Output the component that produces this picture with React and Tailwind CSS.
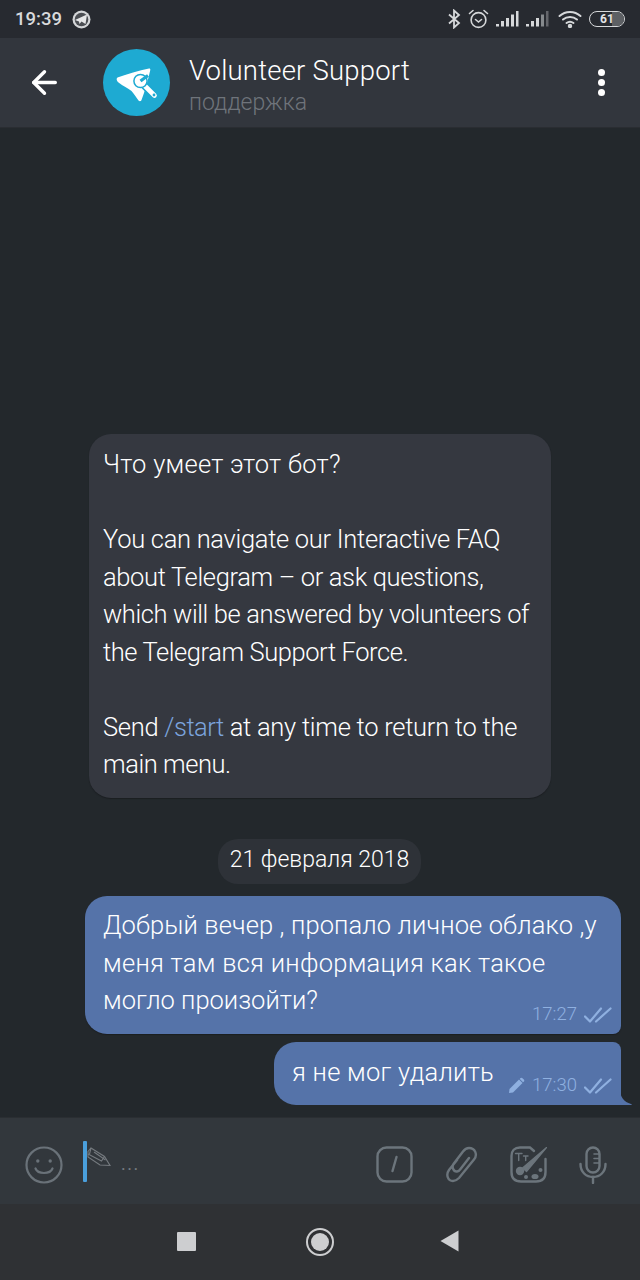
import React from 'react';
import { ArrowLeft } from 'lucide-react';

const DoubleCheck = () => (
  <svg width="28" height="18" viewBox="0 0 28 18" fill="none" stroke="#8fb0e0" strokeWidth="2.2" strokeLinecap="round" strokeLinejoin="round">
    <path d="M1 10.5 L6 15.5 L17 2.5" />
    <path d="M12 15.5 L26.5 2.5" />
  </svg>
);

const Signal = ({ dim }) => (
  <svg width="23" height="18" viewBox="0 0 23 18" fill="#d6d8da">
    <rect x="0" y="14" width="3" height="2.5" />
    <rect x="5" y="11" width="3" height="5.5" />
    <rect x="10" y="8" width="3" height="8.5" />
    <rect x="15" y="4.5" width="3" height="12" opacity={dim ? 0.55 : 1} />
    <rect x="20" y="1" width="2.5" height="15.5" opacity={dim ? 0.35 : 1} />
  </svg>
);

const StatusBar = () => (
  <div className="h-[38px] bg-[#272a30] flex items-center pl-[15px] pr-[15px] shrink-0">
    <span className="text-[18.5px] font-medium text-[#d8dadc] leading-none">19:39</span>
    <svg className="ml-[10px]" width="19" height="19" viewBox="0 0 19 19">
      <circle cx="9.5" cy="9.5" r="9" fill="#d4d6d8" />
      <circle cx="9.5" cy="9.5" r="6.8" fill="#4b4e53" />
      <path d="M3 10 L15 4.5 L13.5 14 L9.5 11.5 L7.5 14 L7 11.5 Z" fill="#e6e7e8" />
    </svg>
    <div className="ml-auto flex items-center gap-[7px]">
      <svg width="13" height="20" viewBox="0 0 13 20" fill="none" stroke="#d6d8da" strokeWidth="1.8">
        <path d="M1 5.5 L11 14 L6 18.5 V1.5 L11 6 L1 14.5" />
      </svg>
      <svg width="21" height="20" viewBox="0 0 21 20" fill="none" stroke="#d6d8da" strokeWidth="1.6" strokeLinecap="round">
        <circle cx="10.5" cy="11" r="7.4" />
        <path d="M7.5 10.5 L10.5 13 L13.5 10.5" />
        <path d="M1.5 4.5 L5 1.5 M19.5 4.5 L16 1.5" />
      </svg>
      <Signal />
      <Signal dim />
      <svg className="ml-[2px]" width="24" height="18" viewBox="0 0 24 18" fill="none" stroke="#d6d8da" strokeWidth="2" strokeLinecap="round">
        <path d="M1.5 6 C7.5 0.5 16.5 0.5 22.5 6" />
        <path d="M5 9.5 C9 6 15 6 19 9.5" />
        <path d="M8.5 13 C10.5 11.5 13.5 11.5 15.5 13" />
        <circle cx="12" cy="16" r="1.2" fill="#d6d8da" />
      </svg>
      <div className="relative w-[36px] h-[16px] rounded-full border-[1.5px] border-[#d6d8da] overflow-hidden flex items-center justify-center">
        <div className="absolute right-0 top-0 bottom-0 w-[12px] bg-[#5d6064]" />
        <span className="relative text-[12px] font-bold text-[#e2e3e4] leading-none">61</span>
      </div>
    </div>
  </div>
);

const Header = () => (
  <div className="h-[90px] bg-[#32363d] border-b border-[#2a2d32] flex items-center shrink-0">
    <div className="w-[103px] pl-[26px] shrink-0">
      <ArrowLeft size={37} color="#ffffff" strokeWidth={2.2} />
    </div>
    <div className="w-[67px] h-[67px] rounded-full bg-[#1eaad2] shrink-0">
      <svg width="67" height="67" viewBox="0 0 67 67">
        <path d="M14.5 28.5 C24 25 36 21.5 46 19.5 C47 19.3 47.5 20 47.3 21 C45 31 42 42 38.5 51 C38 52.5 36.5 52.5 35.5 51.5 C33 48 31 45 28.5 42 C25 39 20 37 15.5 33.5 C13.5 32 13 29.5 14.5 28.5 Z" fill="#ffffff" />
        <path d="M38 33 L51.5 46.5" stroke="#1eaad2" strokeWidth="8" strokeLinecap="round" />
        <path d="M38 33 L51.5 46.5" stroke="#ffffff" strokeWidth="4.6" strokeLinecap="round" />
        <circle cx="37.5" cy="32" r="6.6" fill="#ffffff" stroke="#1eaad2" strokeWidth="1.5" />
        <path d="M37.5 32 L45 26.5" stroke="#1eaad2" strokeWidth="3.2" />
        <circle cx="51" cy="46" r="1.4" fill="#1eaad2" />
      </svg>
    </div>
    <div className="ml-[19px] pt-[4px] flex flex-col">
      <span className="text-[27.5px] font-light text-white leading-[34px] tracking-[0.2px]">Volunteer Support</span>
      <span className="mt-[1px] text-[23px] font-light text-[#6f747b] leading-[27px]">поддержка</span>
    </div>
    <div className="ml-auto mr-[35px] flex flex-col gap-[3px]">
      <div className="w-[7px] h-[7px] rounded-full bg-white" />
      <div className="w-[7px] h-[7px] rounded-full bg-white" />
      <div className="w-[7px] h-[7px] rounded-full bg-white" />
    </div>
  </div>
);

const InfoCard = () => (
  <div className="ml-[89px] w-[462px] h-[364px] rounded-[22px] bg-[#353840] shadow-[0_1px_1px_#1b1e21] pl-[14px] pt-[12px] text-[25.5px] font-light leading-[37.5px] text-white">
    <p className="tracking-[0.26px]">Что умеет этот бот?</p>
    <p className="mt-[37.5px] tracking-[-0.3px]">
      You can navigate our Interactive FAQ<br />
      <span className="tracking-[-0.35px]">about Telegram – or ask questions,</span><br />
      <span className="tracking-[-0.38px]">which will be answered by volunteers of</span><br />
      <span className="tracking-[-0.42px]">the Telegram Support Force.</span>
    </p>
    <p className="mt-[37.5px] tracking-[-0.27px]">
      Send <span className="text-[#7ba3dc] tracking-[-0.5px]">/start</span> at any time to return to the<br />
      <span className="tracking-[-0.45px]">main menu.</span>
    </p>
  </div>
);

const Chat = () => (
  <div className="h-[989px] bg-[#23282c] flex flex-col pt-[306px] shrink-0">
    <InfoCard />
    <div className="mt-[41px] self-center ml-[-1px] h-[45px] w-[203px] rounded-[20px] bg-[#2e3238] flex items-center justify-center pb-[2px] text-[23px] font-light text-white">
      21 февраля 2018
    </div>
    <div className="mt-[12px] ml-[85px] w-[536px] h-[138px] rounded-[22px] rounded-br-[8px] bg-[#5573a9] shadow-[0_1px_1px_#1b1e21] relative pl-[18px] pt-[11px] text-[25.5px] font-light leading-[37.5px] text-white">
      <p className="tracking-[0.12px]">Добрый вечер , пропало личное облако ,у<br /><span className="tracking-[0.27px]">меня там вся информация как такое</span><br /><span className="tracking-[0px]">могло произойти?</span></p>
      <div className="absolute right-[9px] bottom-[9px] flex items-center gap-[7px]">
        <span className="mb-[2px] text-[18.5px] font-light text-[#8fb0e0] leading-none">17:27</span>
        <DoubleCheck />
      </div>
    </div>
    <div className="mt-[8px] ml-[274px] w-[347px] h-[63px] rounded-l-[22px] rounded-tr-[8px] bg-[#5573a9] relative pl-[18px] pt-[12px] text-[25.5px] font-light leading-[37.5px] text-white">
      <p className="tracking-[0.25px]">я не мог удалить</p>
      <svg className="absolute right-[-11px] bottom-0" width="12" height="16" viewBox="0 0 12 16">
        <path d="M0 0 C0 8 4 13 11 15 C12 15.5 12 16 11 16 L0 16 Z" fill="#5573a9" />
      </svg>
      <div className="absolute right-[9px] bottom-[9px] flex items-center gap-[7px]">
        <svg width="17" height="17" viewBox="0 0 17 17" fill="#8fb0e0">
          <path d="M1 16 L1.5 12 L11 2.5 L14.5 6 L5 15.5 Z" />
          <path d="M12.2 1.3 C13 0.5 13.8 0.5 14.5 1.2 L15.8 2.5 C16.5 3.2 16.5 4 15.7 4.8 L15 5.2 L11.8 2 Z" />
        </svg>
        <span className="mb-[2px] text-[18.5px] font-light text-[#8fb0e0] leading-none">17:30</span>
        <DoubleCheck />
      </div>
    </div>
  </div>
);

const InputBar = () => (
  <div className="h-[87px] bg-[#32373c] border-t border-[#2a2e32] flex items-center shrink-0 relative">
    <svg className="ml-[25px] mt-[7px] shrink-0" width="38" height="38" viewBox="0 0 38 38" fill="none" stroke="#6a7279" strokeWidth="2.2" strokeLinecap="round">
      <circle cx="19" cy="19" r="17.5" />
      <circle cx="12.8" cy="15" r="1.7" fill="#6a7279" stroke="none" />
      <circle cx="25.2" cy="15" r="1.7" fill="#6a7279" stroke="none" />
      <path d="M10.5 22.5 C13 28.5 25 28.5 27.5 22.5" />
    </svg>
    <div className="ml-[20px] w-[4px] h-[41px] rounded-[1px] bg-[#4a9fdc] shrink-0" />
    <svg className="shrink-0 -mt-[5px]" width="24" height="24" viewBox="0 0 24 24" fill="none" stroke="#757a7f" strokeWidth="1.1">
      <path d="M1 4.5 L4 1 L17.5 9.5 L23 18.5 L13 18 L1 10 Z" />
      <path d="M4 1 L2.5 7 M17.5 9.5 L14.5 14 L1 7 M7 5 L18.5 13" />
    </svg>
    <span className="ml-[10px] text-[18px] text-[#767b80] tracking-[1.5px] font-normal leading-none mt-[6px]">...</span>

    <div className="ml-auto mr-[33px] mt-[7px] flex items-center gap-[32px]">
      <svg width="37" height="37" viewBox="0 0 37 37" fill="none" stroke="#6c757c" strokeWidth="2.4" strokeLinecap="round">
        <rect x="1.5" y="1.5" width="34" height="34" rx="9" />
        <path d="M20.5 11 L16.5 25" />
      </svg>
      <svg width="33" height="37" viewBox="0 0 33 37" fill="none" stroke="#6c757c" strokeWidth="2.4" strokeLinecap="round">
        <path d="M12 14 L4 24 C0.5 29 3 35 8 35 C10.5 35 12 34 14 32 L29 13.5 C33 8.5 30 2 24 2 C21.5 2 19.5 3.5 18 5.5 L8.5 18 C6.5 21 8.5 26 12 25.5 C13.5 25.3 14.5 24.5 15.5 23 L24 12" />
      </svg>
      <svg width="37" height="37" viewBox="0 0 37 37" fill="none" stroke="#6c757c" strokeWidth="2.4" strokeLinecap="round">
        <path d="M24 5 L20 1.5 H10 C4.5 1.5 1.5 5 1.5 10 V26 C1.5 32 5 35.5 11 35.5 H26 C32 35.5 35.5 32 35.5 26 V13" />
        <path d="M12.5 22 L16.5 25.5 L36.5 1.5 Z" fill="#6c757c" strokeWidth="1.2" strokeLinejoin="round" />
        <path d="M5.5 7.5 H12 M8.7 7.5 V14.5 M13.5 10 H18 M15.7 10 V14.5" strokeWidth="1.4" />
        <circle cx="10" cy="25" r="4.2" fill="#6c757c" stroke="none" />
        <circle cx="16" cy="31" r="2" fill="#6c757c" stroke="none" />
        <ellipse cx="25" cy="30.5" rx="3.5" ry="2.6" fill="#6c757c" stroke="none" />
        <circle cx="30.5" cy="24" r="2" fill="#6c757c" stroke="none" />
      </svg>
      <svg width="28" height="38" viewBox="0 0 28 38" fill="none" stroke="#6c757c" strokeWidth="2.4" strokeLinecap="round">
        <rect x="7.5" y="1.5" width="13" height="25" rx="6.5" />
        <path d="M15 8 H20 M15 12.5 H20 M15 17 H20" strokeWidth="1.6" />
        <path d="M1.5 18 C1.5 26 7 31 14 31 C21 31 26.5 26 26.5 18" />
        <path d="M14 31 V37" />
      </svg>
    </div>
  </div>
);

const NavBar = () => (
  <div className="flex-1 bg-[#2f3134] flex items-center shrink-0 pb-[2px]">
    <div className="ml-[177px] w-[19px] h-[19px] bg-[#cdced0] rounded-[1px]" />
    <div className="ml-[110px] mt-[2px] w-[28px] h-[28px] rounded-full border-[2.5px] border-[#cdced0] flex items-center justify-center">
      <div className="w-[18px] h-[18px] rounded-full bg-[#cdced0]" />
    </div>
    <svg className="ml-[106px]" width="20" height="22" viewBox="0 0 20 22">
      <path d="M0.5 11 L18.5 0.5 V21.5 Z" fill="#cdced0" />
    </svg>
  </div>
);

export default function App() {
  return (
    <div className="w-[640px] h-[1280px] flex flex-col overflow-hidden font-['Roboto',sans-serif]">
      <StatusBar />
      <Header />
      <Chat />
      <InputBar />
      <NavBar />
    </div>
  );
}
